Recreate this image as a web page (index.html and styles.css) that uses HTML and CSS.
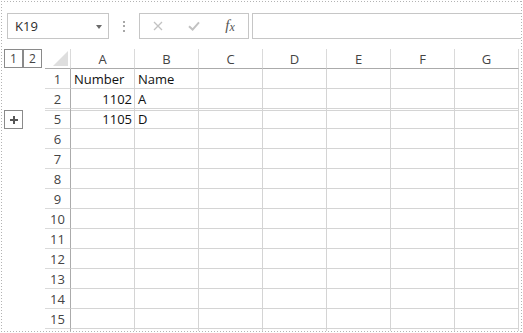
FILE: index.html
```html
<!DOCTYPE html>
<html>
<head>
<meta charset="utf-8">
<link rel="stylesheet" href="styles.css">
</head>
<body>
<div class="frame">
  <div class="fbar">
    <div class="namebox"><span class="name">K19</span><span class="caret"></span></div>
    <div class="vdots"><i></i><i></i><i></i></div>
    <div class="fbtns">
      <span class="slot"><svg width="10" height="10" viewBox="0 0 10 10"><path d="M1 1L9 9M9 1L1 9" stroke="#c2c2c2" stroke-width="1.3" fill="none"/></svg></span>
      <span class="slot"><svg width="12" height="10" viewBox="0 0 12 10"><path d="M1 5.2L4.6 8.6L11 1.4" stroke="#c2c2c2" stroke-width="2" fill="none"/></svg></span>
      <span class="slot fx">f<span class="fxx">x</span></span>
    </div>
    <div class="finput"></div>
  </div>
  <div class="sheet">
    <div class="outline">
      <div class="levels"><span class="lvl">1</span><span class="lvl">2</span></div>
      <div class="plus"><svg width="8" height="8" viewBox="0 0 8 8"><path d="M3 0h2v8h-2z M0 3h8v2h-8z" fill="#555"/></svg></div>
    </div>
    <div class="grid">
      <div class="corner"><svg width="15" height="15" viewBox="0 0 15 15"><polygon points="15,0 15,15 0,15" fill="#dedede"/></svg></div>
      <div class="ch">A</div><div class="ch">B</div><div class="ch">C</div><div class="ch">D</div><div class="ch">E</div><div class="ch">F</div><div class="ch">G</div>

      <div class="rh">1</div><div class="c">Number</div><div class="c">Name</div><div class="c"></div><div class="c"></div><div class="c"></div><div class="c"></div><div class="c"></div>
      <div class="rh">2</div><div class="c num">1102</div><div class="c">A</div><div class="c"></div><div class="c"></div><div class="c"></div><div class="c"></div><div class="c"></div>
      <div class="rh r5">5</div><div class="c num r5">1105</div><div class="c r5">D</div><div class="c r5"></div><div class="c r5"></div><div class="c r5"></div><div class="c r5"></div><div class="c r5"></div>
      <div class="rh">6</div><div class="c"></div><div class="c"></div><div class="c"></div><div class="c"></div><div class="c"></div><div class="c"></div><div class="c"></div>
      <div class="rh">7</div><div class="c"></div><div class="c"></div><div class="c"></div><div class="c"></div><div class="c"></div><div class="c"></div><div class="c"></div>
      <div class="rh">8</div><div class="c"></div><div class="c"></div><div class="c"></div><div class="c"></div><div class="c"></div><div class="c"></div><div class="c"></div>
      <div class="rh">9</div><div class="c"></div><div class="c"></div><div class="c"></div><div class="c"></div><div class="c"></div><div class="c"></div><div class="c"></div>
      <div class="rh">10</div><div class="c"></div><div class="c"></div><div class="c"></div><div class="c"></div><div class="c"></div><div class="c"></div><div class="c"></div>
      <div class="rh">11</div><div class="c"></div><div class="c"></div><div class="c"></div><div class="c"></div><div class="c"></div><div class="c"></div><div class="c"></div>
      <div class="rh">12</div><div class="c"></div><div class="c"></div><div class="c"></div><div class="c"></div><div class="c"></div><div class="c"></div><div class="c"></div>
      <div class="rh">13</div><div class="c"></div><div class="c"></div><div class="c"></div><div class="c"></div><div class="c"></div><div class="c"></div><div class="c"></div>
      <div class="rh">14</div><div class="c"></div><div class="c"></div><div class="c"></div><div class="c"></div><div class="c"></div><div class="c"></div><div class="c"></div>
      <div class="rh">15</div><div class="c"></div><div class="c"></div><div class="c"></div><div class="c"></div><div class="c"></div><div class="c"></div><div class="c"></div>
      <div class="rh"></div><div class="c"></div><div class="c"></div><div class="c"></div><div class="c"></div><div class="c"></div><div class="c"></div><div class="c"></div>
    </div>
  </div>
</div>
</body>
</html>
```
FILE: styles.css
```css
* { box-sizing: border-box; }

body {
  margin: 0;
  background: #fff;
  font-family: "Open Sans", "Noto Sans", sans-serif;
  font-size: 13px;
  color: #111;
}

.frame {
  margin: 1px 0 0 1px;
  width: 521px;
  height: 331px;
  border: 1px solid transparent;
  overflow: hidden;
  background:
    repeating-linear-gradient(90deg, #b3b3b3 0 1px, transparent 1px 3px) top left / 100% 1px no-repeat border-box,
    repeating-linear-gradient(90deg, #b3b3b3 0 1px, transparent 1px 3px) bottom left / 100% 1px no-repeat border-box,
    repeating-linear-gradient(180deg, #b3b3b3 0 1px, transparent 1px 3px) top left / 1px 100% no-repeat border-box,
    repeating-linear-gradient(180deg, #b3b3b3 0 1px, transparent 1px 3px) top right / 1px 100% no-repeat border-box,
    #fff;
}

/* formula bar */
.fbar {
  display: flex;
  height: 37px;
  padding: 11px 0 0 5px;
}

.namebox {
  width: 102px;
  height: 26px;
  border: 1px solid #c6c6c6;
  display: flex;
  align-items: center;
  justify-content: space-between;
  padding: 0 6px 0 7px;
}

.name { color: #2b2b2b; }

.caret {
  width: 0;
  height: 0;
  border-left: 3.5px solid transparent;
  border-right: 3.5px solid transparent;
  border-top: 4px solid #6a6a6a;
  margin-top: 1px;
}

.vdots {
  width: 30px;
  height: 26px;
  display: flex;
  flex-direction: column;
  align-items: center;
  justify-content: center;
  gap: 2.5px;
}

.vdots i {
  display: block;
  width: 2px;
  height: 2px;
  background: #a8a8a8;
}

.fbtns {
  width: 110px;
  height: 26px;
  border: 1px solid #c6c6c6;
  display: flex;
}

.slot {
  width: 36px;
  display: flex;
  align-items: center;
  justify-content: center;
}

.fx {
  font-family: "Liberation Serif", "DejaVu Serif", serif;
  font-style: italic;
  font-size: 15px;
  color: #555;
  padding-bottom: 2px;
}

.fxx {
  font-size: 12px;
  position: relative;
  top: 2px;
}

.finput {
  flex: 1;
  height: 26px;
  margin-left: 3px;
  border: 1px solid #c6c6c6;
  border-right: 0;
}

/* sheet */
.sheet {
  display: flex;
  margin-top: 10px;
}

.outline {
  width: 43px;
  flex: none;
  padding-left: 2px;
}

.levels { display: flex; }

.lvl {
  width: 19px;
  height: 19px;
  border: 1px solid #8a8a8a;
  display: flex;
  align-items: center;
  justify-content: center;
  font-size: 12px;
  color: #444;
}

.plus {
  width: 19px;
  height: 19px;
  margin-top: 42px;
  border: 1px solid #8a8a8a;
  display: flex;
  align-items: center;
  justify-content: center;
}

.grid {
  display: grid;
  grid-template-columns: 26px repeat(7, 64px);
  grid-auto-rows: 20px;
  flex: none;
}

.corner {
  border-right: 1px solid #dadada;
  border-bottom: 1px solid #ababab;
  display: flex;
  align-items: flex-end;
  justify-content: flex-end;
  padding: 0 2px 2px 0;
}

.ch {
  border-right: 1px solid #dadada;
  border-bottom: 1px solid #ababab;
  display: flex;
  align-items: center;
  justify-content: center;
  color: #444;
}

.rh {
  border-right: 1px solid #ababab;
  border-bottom: 1px solid #dadada;
  display: flex;
  align-items: center;
  justify-content: center;
  color: #444;
}

.c {
  border-right: 1px solid #d4d4d4;
  border-bottom: 1px solid #d4d4d4;
  display: flex;
  align-items: center;
  padding: 0 2px 0 3px;
  white-space: nowrap;
}

.num { justify-content: flex-end; }

.r5 {
  box-shadow: inset 0 1px 0 #fff, inset 0 2px 0 #d4d4d4;
}

.rh.r5 {
  box-shadow: inset 0 1px 0 #fff, inset 0 2px 0 #dadada;
}
```
